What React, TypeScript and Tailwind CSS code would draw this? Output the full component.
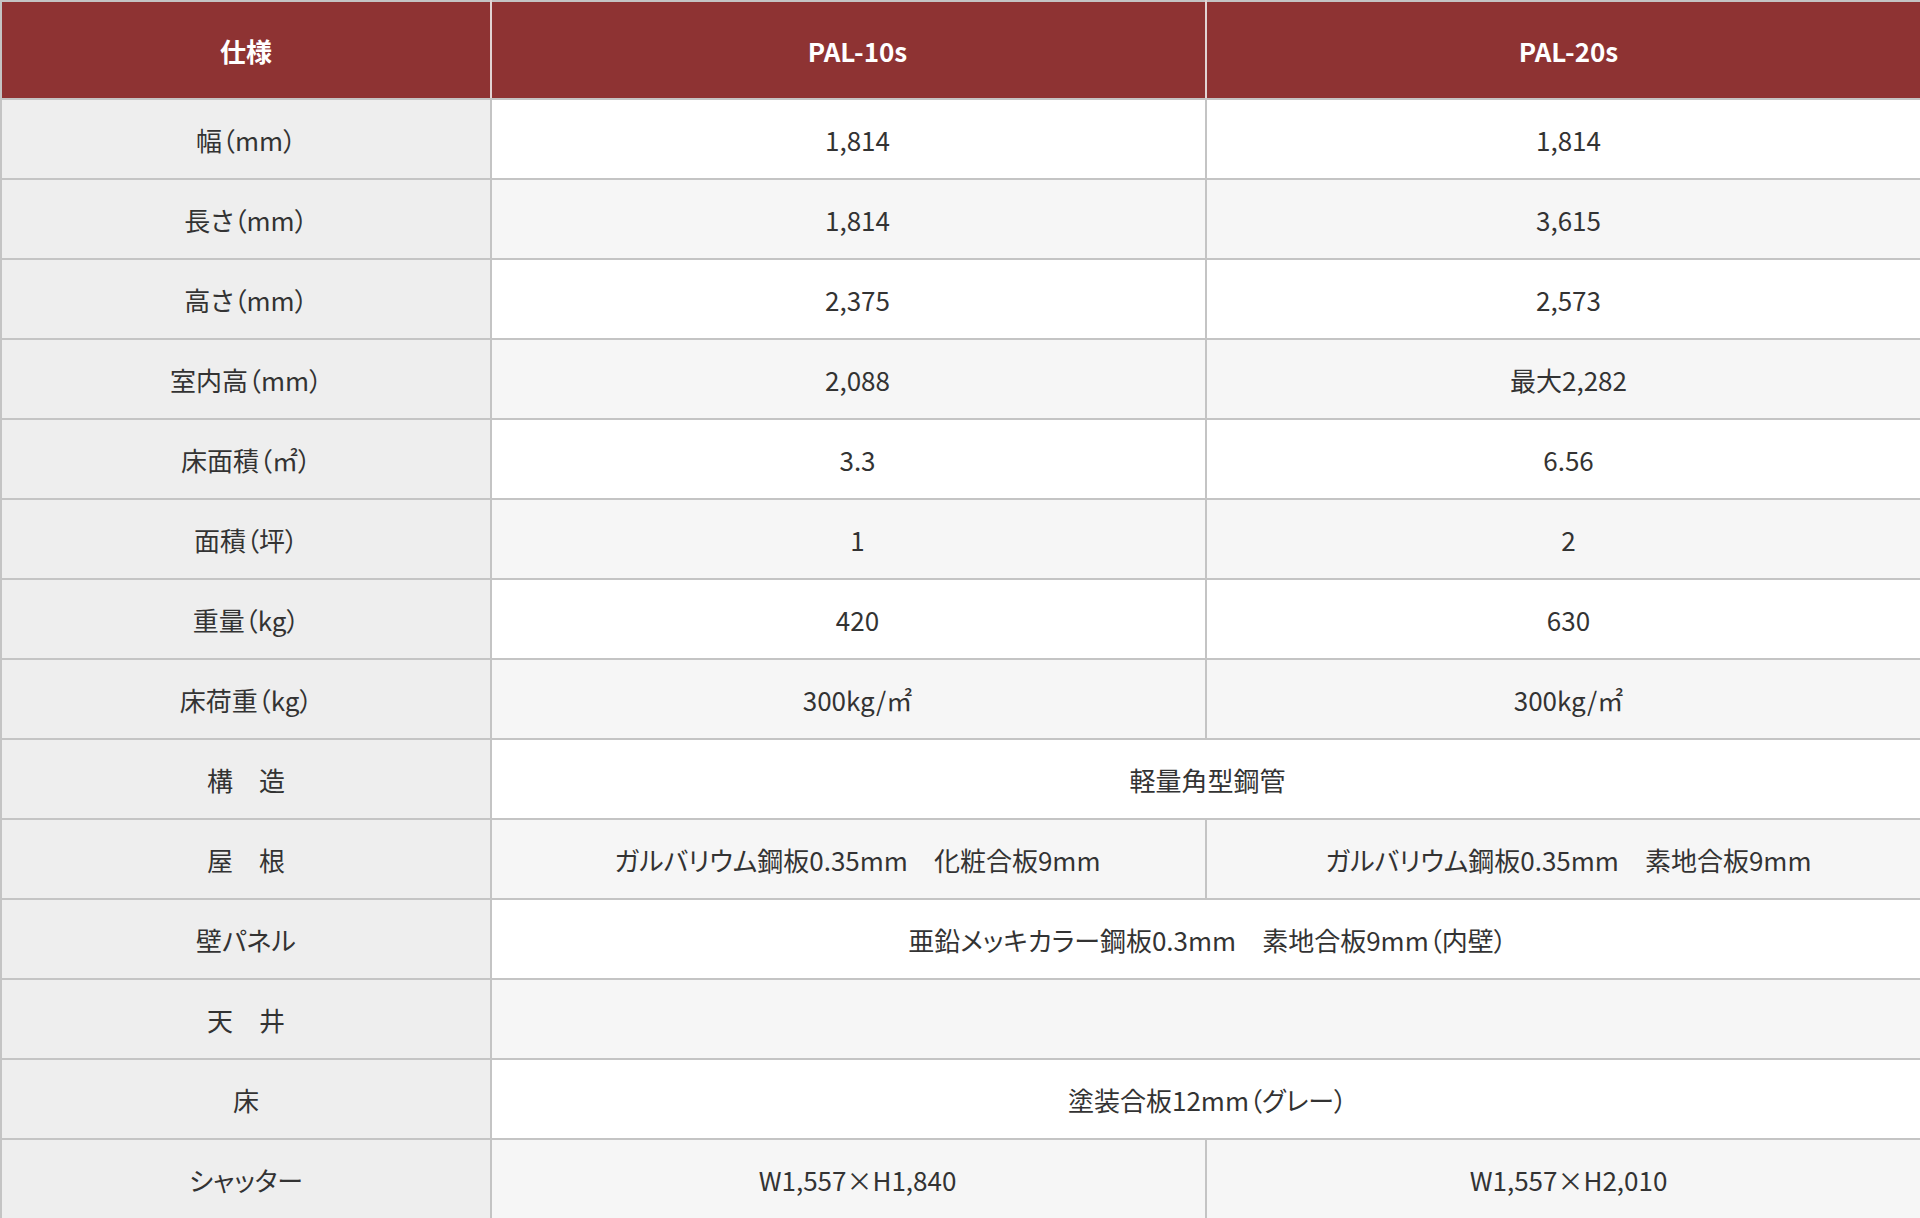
import React from "react";

type Row = {
  label: string;
  a?: string;
  b?: string;
  span?: string;
};

const rows: Row[] = [
  { label: "幅（mm）", a: "1,814", b: "1,814" },
  { label: "長さ（mm）", a: "1,814", b: "3,615" },
  { label: "高さ（mm）", a: "2,375", b: "2,573" },
  { label: "室内高（mm）", a: "2,088", b: "最大2,282" },
  { label: "床面積（㎡）", a: "3.3", b: "6.56" },
  { label: "面積（坪）", a: "1", b: "2" },
  { label: "重量（kg）", a: "420", b: "630" },
  { label: "床荷重（kg）", a: "300kg/㎡", b: "300kg/㎡" },
  { label: "構　造", span: "軽量角型鋼管" },
  { label: "屋　根", a: "ガルバリウム鋼板0.35mm　化粧合板9mm", b: "ガルバリウム鋼板0.35mm　素地合板9mm" },
  { label: "壁パネル", span: "亜鉛メッキカラー鋼板0.3mm　素地合板9mm（内壁）" },
  { label: "天　井", span: "" },
  { label: "床", span: "塗装合板12mm（グレー）" },
  { label: "シャッター", a: "W1,557×H1,840", b: "W1,557×H2,010" },
];

export default function App() {
  return (
    <div
      className="w-[1920px] h-[1218px] bg-white overflow-hidden [font-feature-settings:'palt']"
      style={{ fontFamily: '"Noto Sans CJK JP", "Noto Sans", sans-serif' }}
    >
      <table className="w-[1920px] border-collapse table-fixed text-[26px] text-[#333]">
        <colgroup>
          <col className="w-[490px]" />
          <col className="w-[715px]" />
          <col className="w-[715px]" />
        </colgroup>
        <thead>
          <tr className="h-[98px] bg-[#8e3333] text-white font-bold">
            <th className="border-2 border-[#c4c4c4] border-r-[#e2d4d4] text-center">仕様</th>
            <th className="border-2 border-[#c4c4c4] border-r-[#e2d4d4] text-center pl-[18px]">PAL-10s</th>
            <th className="border-2 border-[#c4c4c4] text-center pl-[10px]">PAL-20s</th>
          </tr>
        </thead>
        <tbody>
          {rows.map((r, i) => {
            const bg = i % 2 === 0 ? "bg-white" : "bg-[#f6f6f6]";
            return (
              <tr key={i} className="h-[80px]">
                <td className="border-2 border-[#c4c4c4] bg-[#eeeeee] text-center">{r.label}</td>
                {r.span !== undefined ? (
                  <td colSpan={2} className={`border-2 border-[#c4c4c4] ${bg} text-center pl-[3px]`}>
                    {r.span}
                  </td>
                ) : (
                  <>
                    <td className={`border-2 border-[#c4c4c4] ${bg} text-center pl-[18px]`}>{r.a}</td>
                    <td className={`border-2 border-[#c4c4c4] ${bg} text-center pl-[10px]`}>{r.b}</td>
                  </>
                )}
              </tr>
            );
          })}
        </tbody>
      </table>
    </div>
  );
}
